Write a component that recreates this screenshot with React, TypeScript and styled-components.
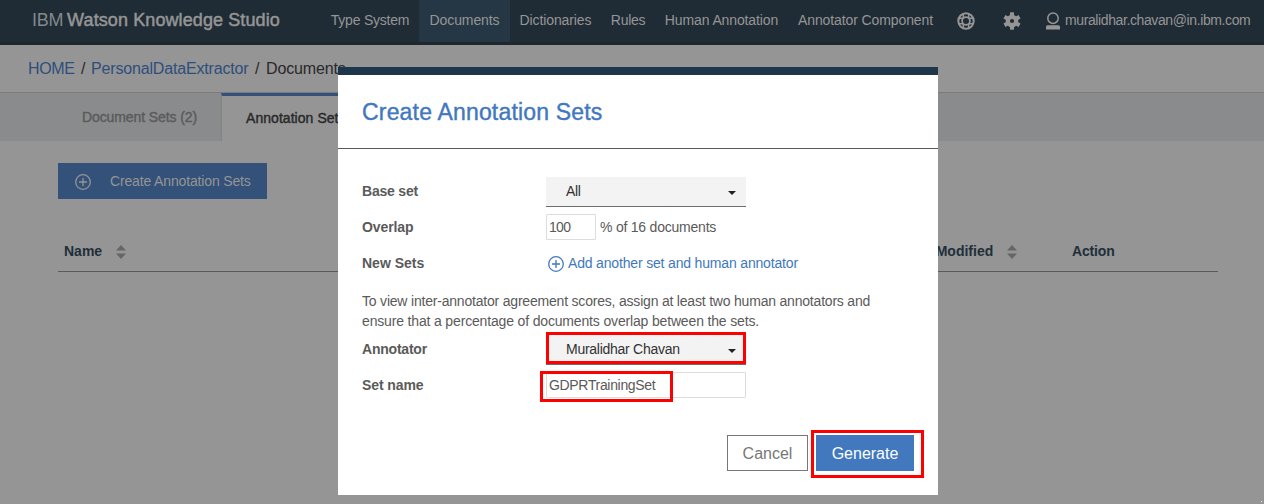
import React from 'react';
import styled, { createGlobalStyle } from 'styled-components';

const GlobalStyle = createGlobalStyle`
  * { box-sizing: border-box; }
  html, body { margin: 0; padding: 0; height: 504px; overflow: hidden; }
  body { background: #959595; font-family: "Liberation Sans", Arial, sans-serif; font-size: 14px; }
`;

const Page = styled.div`
  position: relative;
  width: 1264px;
  height: 504px;
  overflow: hidden;
  background: #959595;
`;

const Text = styled.span<{ $ls?: number }>`
  letter-spacing: ${p => p.$ls ?? 0}px;
  white-space: nowrap;
`;

/* Header */
const Header = styled.header`
  display: flex;
  height: 45px;
  padding-left: 32px;
  background: #202c35;
  border-bottom: 3px solid #1c282c;
  color: #959595;
`;
const Brand = styled.div`
  width: 289px;
  line-height: 40px;
  font-size: 18px;
  white-space: nowrap;
`;
const BrandLight = styled.span`
  color: #83888b;
  letter-spacing: -0.3px;
  margin-right: 4px;
`;
const BrandStrong = styled.span`
  -webkit-text-stroke: 0.5px currentColor;
  letter-spacing: 0.1px;
`;
const NavItem = styled.a<{ $w: number; $active?: boolean; $ls?: number }>`
  width: ${p => p.$w}px;
  height: 42px;
  line-height: 40px;
  text-align: center;
  white-space: nowrap;
  letter-spacing: ${p => p.$ls ?? 0}px;
  background: ${p => (p.$active ? '#253744' : 'transparent')};
`;
const HeaderIcon = styled.span<{ $w: number }>`
  display: flex;
  justify-content: center;
  width: ${p => p.$w}px;
  padding-top: 12px;
`;
const User = styled.div`
  display: flex;
  gap: 5px;
  margin-left: 12px;
  line-height: 40px;
  white-space: nowrap;
  svg { margin-top: 12px; }
`;

/* Breadcrumb and tabs */
const Breadcrumb = styled.nav`
  display: flex;
  height: 48px;
  padding-left: 28px;
  line-height: 47px;
  font-size: 16px;
  border-bottom: 1px solid #7c7c7c;
`;
const Crumb = styled.span<{ $w: number; $link?: boolean; $ls?: number }>`
  width: ${p => p.$w}px;
  white-space: nowrap;
  letter-spacing: ${p => p.$ls ?? 0}px;
  color: ${p => (p.$link ? '#2e4e7b' : '#28292a')};
`;
const Tabs = styled.div`
  display: flex;
  height: 48px;
  background: #8a8b8d;
`;
const Tab = styled.div<{ $active?: boolean }>`
  width: ${p => (p.$active ? 166 : 221)}px;
  padding-left: ${p => (p.$active ? 24 : 82)}px;
  line-height: ${p => (p.$active ? 45 : 49)}px;
  white-space: nowrap;
  color: ${p => (p.$active ? '#28292a' : '#5a5b5c')};
  -webkit-text-stroke: 0.4px currentColor;
  letter-spacing: ${p => (p.$active ? 0.05 : -0.1)}px;
  background: ${p => (p.$active ? '#959595' : 'transparent')};
  border-top: ${p => (p.$active ? '3px solid #335179' : '0')};
  border-left: ${p => (p.$active ? '1px solid #838383' : '0')};
`;

/* Content */
const Content = styled.main`
  padding: 22px 46px 0 58px;
`;
const CreateButton = styled.div`
  display: flex;
  align-items: center;
  width: 209px;
  height: 36px;
  padding-left: 17px;
  gap: 19px;
  color: #959595;
  background: #335179;
  white-space: nowrap;
  svg { margin-top: 1px; }
`;
const TableHead = styled.div`
  display: flex;
  align-items: center;
  height: 41px;
  margin-top: 32px;
  padding-left: 6px;
  border-bottom: 1px solid #5b5b5b;
  color: #202f3a;
  font-weight: bold;
`;
const HeadCell = styled.div<{ $w: number }>`
  display: flex;
  align-items: center;
  gap: 14px;
  width: ${p => p.$w}px;
  white-space: nowrap;
  svg { margin-top: 2px; }
`;

/* Dialog */
const Dialog = styled.section`
  position: absolute;
  left: 338px;
  top: 67px;
  width: 600px;
  height: 428px;
  border-top: 8px solid #1d364a;
  background: #fff;
  color: #5a5a5a;
`;
const DialogTitle = styled.h1`
  margin: 0;
  height: 74px;
  padding-left: 24px;
  line-height: 74px;
  font-size: 23px;
  font-weight: normal;
  letter-spacing: 0.18px;
  color: #4178be;
  -webkit-text-stroke: 0.4px currentColor;
  border-bottom: 1px solid #5a5a5a;
`;
const Form = styled.div`
  padding: 24px 24px 0;
`;
const Field = styled.div`
  display: flex;
  align-items: center;
  height: 36px;
`;
const Label = styled.label<{ $ls?: number }>`
  width: 184px;
  font-weight: bold;
  letter-spacing: ${p => p.$ls ?? 0}px;
  white-space: nowrap;
`;
const Select = styled.div`
  display: flex;
  align-items: center;
  justify-content: space-between;
  width: 200px;
  height: 30px;
  margin-top: 2px;
  padding: 0 10px 1px 20px;
  color: #323232;
  background: #f3f3f3;
  border-bottom: 1px solid #6d6d6d;
  svg { margin-top: 3px; }
`;
const TextInput = styled.div<{ $w: number }>`
  width: ${p => p.$w}px;
  height: 26px;
  padding-left: 2px;
  line-height: 24px;
  border: 1px solid #dcdcdc;
  border-radius: 1px;
`;
const Suffix = styled.span`
  margin-left: 4px;
`;
const AddLink = styled.a`
  display: flex;
  align-items: center;
  gap: 4px;
  margin-left: 2px;
  color: #4178be;
  svg { margin-top: 1px; }
`;
const Hint = styled.p`
  margin: 10px 0 0;
  line-height: 20px;
  white-space: nowrap;
`;
const Actions = styled.div`
  display: flex;
  justify-content: flex-end;
  gap: 8px;
  margin-top: 32px;
`;
const Button = styled.div<{ $primary?: boolean }>`
  width: ${p => (p.$primary ? 98 : 81)}px;
  height: 36px;
  line-height: ${p => (p.$primary ? 37 : 35)}px;
  text-align: center;
  font-size: 16px;
  color: ${p => (p.$primary ? '#fff' : '#777')};
  background: ${p => (p.$primary ? '#4178be' : '#fff')};
  border: ${p => (p.$primary ? '0' : '1px solid #777')};
`;
const Highlight = styled.div<{ $x: number; $y: number; $w: number; $h: number }>`
  position: absolute;
  left: ${p => p.$x}px;
  top: ${p => p.$y}px;
  width: ${p => p.$w}px;
  height: ${p => p.$h}px;
  border: 3px solid #fe0000;
`;
const Speck = styled.i`
  position: absolute;
  right: 2px;
  bottom: 2px;
  width: 1px;
  height: 1px;
  background: #fff;
`;

const PlusIcon = () => (
  <svg width="16" height="16" viewBox="0 0 16 16" fill="none" stroke="currentColor" strokeWidth="1.3">
    <circle cx="8" cy="8" r="7.3" />
    <path d="M8 4v8M4 8h8" />
  </svg>
);
const SortIcon = () => (
  <svg width="10" height="14" viewBox="0 0 10 14" fill="#666">
    <path d="M0 5.5L5 0l5 5.5zM0 8.5L5 14l5-5.5z" />
  </svg>
);
const Caret = () => (
  <svg width="8" height="4" viewBox="0 0 8 4" fill="#222">
    <path d="M0 0h8L4 4z" />
  </svg>
);
const HelpIcon = () => (
  <svg width="18" height="18" viewBox="0 0 18 18" fill="none" stroke="currentColor">
    <circle cx="9" cy="9" r="7.7" strokeWidth="2" />
    <circle cx="9" cy="9" r="3.9" strokeWidth="1.8" />
    <path d="M6.3 1.6v4.6M11.7 1.6v4.6M6.3 11.8v4.6M11.7 11.8v4.6M1.6 6.3h4.6M1.6 11.7h4.6M11.8 6.3h4.6M11.8 11.7h4.6" strokeWidth="1.4" />
  </svg>
);
const GearIcon = () => (
  <svg width="18" height="18" viewBox="0 0 18 18" fill="none" stroke="currentColor">
    <circle cx="9" cy="9" r="4.2" strokeWidth="4.2" />
    {[0, 60, 120, 180, 240, 300].map(a => (
      <path key={a} d="M9 0.3v4" strokeWidth="4" transform={`rotate(${a} 9 9)`} />
    ))}
  </svg>
);
const UserIcon = () => (
  <svg width="14" height="18" viewBox="0 0 14 18">
    <circle cx="7" cy="6.2" r="5.2" fill="none" stroke="currentColor" strokeWidth="1.5" />
    <path d="M0 17.4v-2.6q0-1.6 1.6-1.6h10.8q1.6 0 1.6 1.6v2.6z" fill="currentColor" />
  </svg>
);

export default function App() {
  return (
    <Page>
      <GlobalStyle />
      <Header>
        <Brand>
          <BrandLight>IBM</BrandLight>
          <BrandStrong>Watson Knowledge Studio</BrandStrong>
        </Brand>
        <NavItem $w={98} $ls={-0.22}>Type System</NavItem>
        <NavItem $w={91} $ls={-0.1} $active>Documents</NavItem>
        <NavItem $w={91} $ls={-0.1}>Dictionaries</NavItem>
        <NavItem $w={54} $ls={-0.3}>Rules</NavItem>
        <NavItem $w={133} $ls={-0.12}>Human Annotation</NavItem>
        <NavItem $w={155} $ls={-0.1}>Annotator Component</NavItem>
        <HeaderIcon $w={46}><HelpIcon /></HeaderIcon>
        <HeaderIcon $w={45}><GearIcon /></HeaderIcon>
        <User>
          <UserIcon />
          <Text $ls={-0.39}>muralidhar.chavan@in.ibm.com</Text>
        </User>
      </Header>
      <Breadcrumb>
        <Crumb $w={53} $ls={-0.35} $link>HOME</Crumb>
        <Crumb $w={10}>/</Crumb>
        <Crumb $w={164} $ls={-0.17} $link>PersonalDataExtractor</Crumb>
        <Crumb $w={11}>/</Crumb>
        <Crumb $w={90} $ls={-0.15}>Documents</Crumb>
      </Breadcrumb>
      <Tabs>
        <Tab>Document Sets (2)</Tab>
        <Tab $active>Annotation Sets</Tab>
      </Tabs>
      <Content>
        <CreateButton>
          <PlusIcon />
          <Text $ls={-0.15}>Create Annotation Sets</Text>
        </CreateButton>
        <TableHead>
          <HeadCell $w={839}>Name <SortIcon /></HeadCell>
          <HeadCell $w={169}>Last Modified <SortIcon /></HeadCell>
          <HeadCell $w={100}><Text $ls={-0.15}>Action</Text></HeadCell>
        </TableHead>
      </Content>
      <Dialog>
        <DialogTitle>Create Annotation Sets</DialogTitle>
        <Form>
          <Field><Label $ls={-0.2}>Base set</Label><Select><Text $ls={-0.3}>All</Text><Caret /></Select></Field>
          <Field><Label $ls={-0.1}>Overlap</Label><TextInput $w={50}><Text $ls={-0.7}>100</Text></TextInput><Suffix><Text $ls={-0.22}>% of 16 documents</Text></Suffix></Field>
          <Field><Label>New Sets</Label><AddLink><PlusIcon /><Text $ls={-0.17}>Add another set and human annotator</Text></AddLink></Field>
          <Hint>
            <Text $ls={-0.2}>To view inter-annotator agreement scores, assign at least two human annotators and</Text><br />
            <Text $ls={-0.16}>ensure that a percentage of documents overlap between the sets.</Text>
          </Hint>
          <Field><Label $ls={-0.22}>Annotator</Label><Select><Text $ls={-0.27}>Muralidhar Chavan</Text><Caret /></Select></Field>
          <Field><Label $ls={-0.1}>Set name</Label><TextInput $w={200}><Text $ls={-0.33}>GDPRTrainingSet</Text></TextInput></Field>
          <Actions>
            <Button>Cancel</Button>
            <Button $primary>Generate</Button>
          </Actions>
        </Form>
      </Dialog>
      <Highlight $x={546} $y={332} $w={200} $h={32} />
      <Highlight $x={540} $y={371} $w={133} $h={31} />
      <Highlight $x={811} $y={430} $w={113} $h={48} />
      <Speck />
    </Page>
  );
}
